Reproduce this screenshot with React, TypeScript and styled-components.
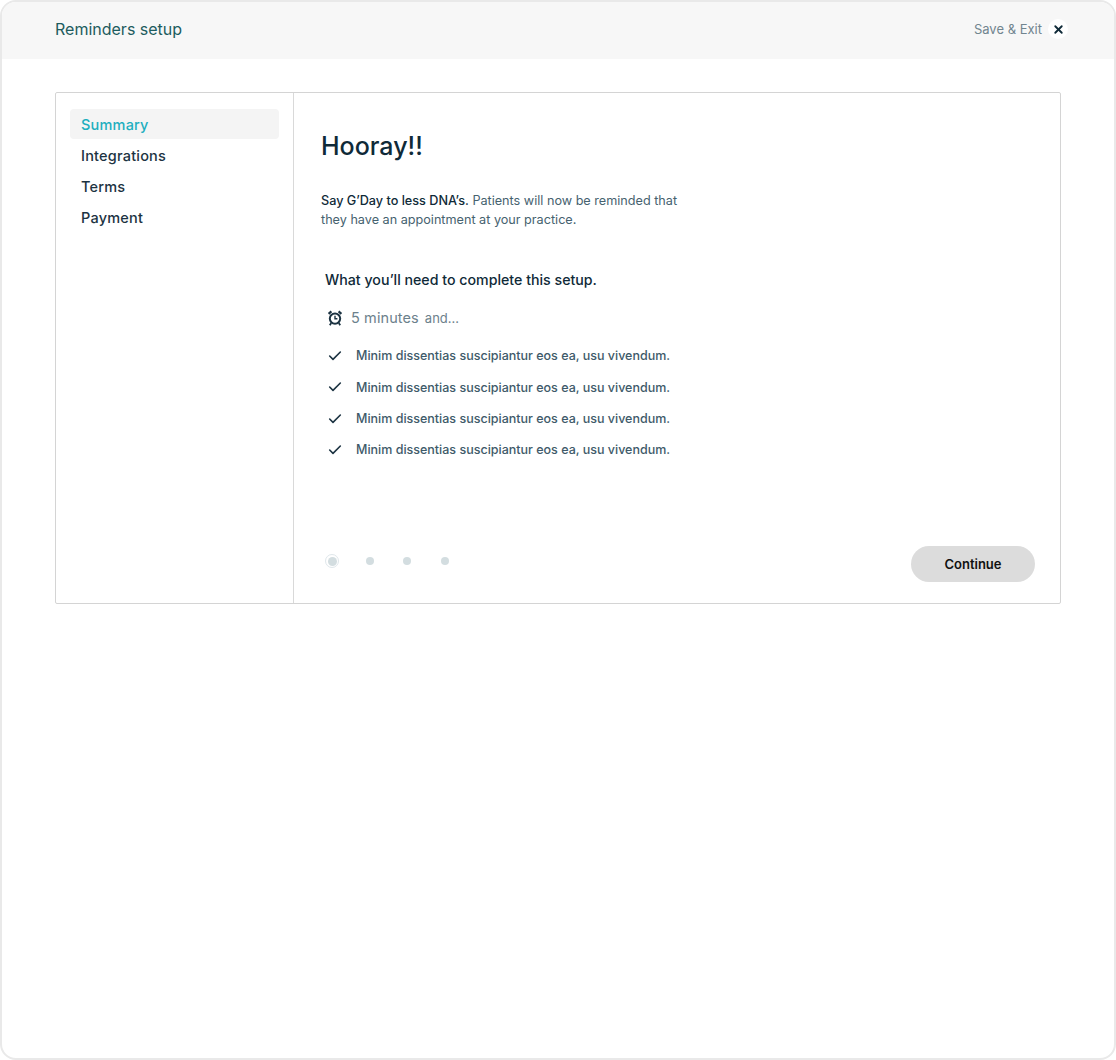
import { FC } from "react";
import styled, { createGlobalStyle } from "styled-components";
import { Check, X } from "lucide-react";

const GlobalStyle = createGlobalStyle`
    html, body {
        margin: 0;
        padding: 0;
        background: #fff;
    }
    * {
        box-sizing: border-box;
    }
    body {
        font-family: Inter, "Liberation Sans", sans-serif;
    }
`

const Frame = styled.div`
    width: 1116px;
    height: 1060px;
    border: 2px solid #e9e9e9;
    border-radius: 16px;
    overflow: hidden;
    background: #fff;
`

const Header = styled.header`
    height: 57px;
    background: #f7f7f7;
    display: flex;
    align-items: center;
    justify-content: space-between;
    padding: 0 46px 3px 53px;
`

const HeaderTitle = styled.h1`
    margin: 0;
    font-size: 16px;
    font-weight: 400;
    color: #1d5c5e;
`

const HeaderActions = styled.div`
    display: flex;
    align-items: center;
    gap: 6px;
`

const SaveExit = styled.span`
    font-size: 13px;
    color: #71858f;
`

const CloseButton = styled.button`
    width: 20px;
    height: 20px;
    padding: 0;
    border: none;
    border-radius: 50%;
    background: #fff;
    color: #0f2a38;
    display: flex;
    align-items: center;
    justify-content: center;
`

const Card = styled.section`
    width: 1006px;
    height: 512px;
    margin: 33px 0 0 53px;
    border: 1px solid #d4d4d4;
    border-radius: 2px;
    display: flex;
`

const Sidebar = styled.nav`
    width: 238px;
    flex-shrink: 0;
    border-right: 1px solid #d9d9d9;
    padding: 16px 14px;
    display: flex;
    flex-direction: column;
    gap: 1.3px;
`

const NavItem = styled.a<{ $active?: boolean }>`
    height: 30px;
    display: flex;
    align-items: center;
    padding: 0 11px;
    border-radius: 4px;
    font-size: 14.5px;
    font-weight: 500;
    letter-spacing: 0.2px;
    color: ${({ $active }) => ($active ? "#1fafbf" : "#1c3342")};
    background: ${({ $active }) => ($active ? "#f4f4f4" : "transparent")};
`

const Main = styled.main`
    flex: 1;
    padding: 34px 25px 21px 27px;
    display: flex;
    flex-direction: column;
`

const Title = styled.h2`
    margin: 0;
    font-size: 25px;
    line-height: 38px;
    font-weight: 500;
    color: #0f2a38;
`

const Intro = styled.p`
    margin: 25.6px 0 0;
    width: 370px;
    font-size: 12.65px;
    line-height: 19.5px;
    color: #46626f;

    & strong {
        font-weight: 500;
        color: #0f2a38;
    }
`

const Requirements = styled.div`
    margin: 40px 0 0 4px;
`

const RequirementsTitle = styled.h3`
    margin: 0;
    font-size: 14.2px;
    line-height: 20px;
    font-weight: 500;
    color: #0f2a38;
`

const TimeRow = styled.div`
    margin-top: 18px;
    height: 20px;
    display: flex;
    align-items: center;
    color: #6c818c;
    font-size: 14.5px;
    letter-spacing: 0.1px;
`

const AlarmIcon = styled.svg`
    width: 16px;
    height: 16px;
    margin: 0 8px 0 2px;
    color: #1c3342;
    flex-shrink: 0;
`

const TimeSuffix = styled.span`
    margin-left: 6px;
    font-size: 13px;
    letter-spacing: 0;
`

const CheckList = styled.ul`
    list-style: none;
    margin: 18.4px 0 0;
    padding: 0;
    display: flex;
    flex-direction: column;
    gap: 11.3px;
`

const CheckItem = styled.li`
    height: 20px;
    display: flex;
    align-items: center;
    gap: 13px;
    padding-left: 2px;
    font-size: 12.5px;
    font-weight: 500;
    color: #3e5a69;

    & svg {
        color: #1c3342;
    }
`

const Footer = styled.div`
    margin-top: auto;
    display: flex;
    align-items: flex-start;
    justify-content: space-between;
`

const Steps = styled.div`
    display: flex;
    align-items: center;
    gap: 23.6px;
    margin: 8px 0 0 4px;
`

const StepDot = styled.span<{ $current?: boolean }>`
    width: 14px;
    height: 14px;
    border-radius: 50%;
    display: flex;
    align-items: center;
    justify-content: center;
    border: 1px solid ${({ $current }) => ($current ? "#dfe7eb" : "transparent")};

    &::after {
        content: "";
        width: ${({ $current }) => ($current ? "9px" : "8px")};
        height: ${({ $current }) => ($current ? "9px" : "8px")};
        border-radius: 50%;
        background: #d3dde0;
    }
`

const ContinueButton = styled.button`
    width: 124px;
    height: 36px;
    border: none;
    border-radius: 18px;
    background: #dcdcdc;
    color: #111;
    font-family: inherit;
    font-size: 13px;
    font-weight: 600;
`

const NAV = ["Summary", "Integrations", "Terms", "Payment"]
const ITEMS = [1, 2, 3, 4].map(() => "Minim dissentias suscipiantur eos ea, usu vivendum.")

const App: FC = () => {
    return (
        <Frame>
            <GlobalStyle />
            <Header>
                <HeaderTitle>Reminders setup</HeaderTitle>
                <HeaderActions>
                    <SaveExit>Save &amp; Exit</SaveExit>
                    <CloseButton><X size={13} strokeWidth={3.4} /></CloseButton>
                </HeaderActions>
            </Header>
            <Card>
                <Sidebar>
                    {NAV.map((item, i) => (
                        <NavItem key={item} $active={i === 0}>{item}</NavItem>
                    ))}
                </Sidebar>
                <Main>
                    <Title>Hooray!!</Title>
                    <Intro>
                        <strong>Say G’Day to less DNA’s.</strong> Patients will now be reminded that they have an appointment at your practice.
                    </Intro>
                    <Requirements>
                        <RequirementsTitle>What you’ll need to complete this setup.</RequirementsTitle>
                        <TimeRow>
                            <AlarmIcon viewBox="0 0 16 16" fill="none" stroke="currentColor">
                                <circle cx="8" cy="8.6" r="5.2" strokeWidth="2" />
                                <path d="M8 5.8v3h2.4" strokeWidth="1.4" />
                                <path d="M1.6 3.8 4.4 1.4M14.4 3.8 11.6 1.4" strokeWidth="2.2" />
                                <path d="M4.2 13 2.8 15.2M11.8 13l1.4 2.2" strokeWidth="1.8" />
                            </AlarmIcon>
                            5 minutes
                            <TimeSuffix>and...</TimeSuffix>
                        </TimeRow>
                        <CheckList>
                            {ITEMS.map((text, i) => (
                                <CheckItem key={i}>
                                    <Check size={16} strokeWidth={2.4} />
                                    {text}
                                </CheckItem>
                            ))}
                        </CheckList>
                    </Requirements>
                    <Footer>
                        <Steps>
                            {[0, 1, 2, 3].map((i) => <StepDot key={i} $current={i === 0} />)}
                        </Steps>
                        <ContinueButton>Continue</ContinueButton>
                    </Footer>
                </Main>
            </Card>
        </Frame>
    )
}

export default App
